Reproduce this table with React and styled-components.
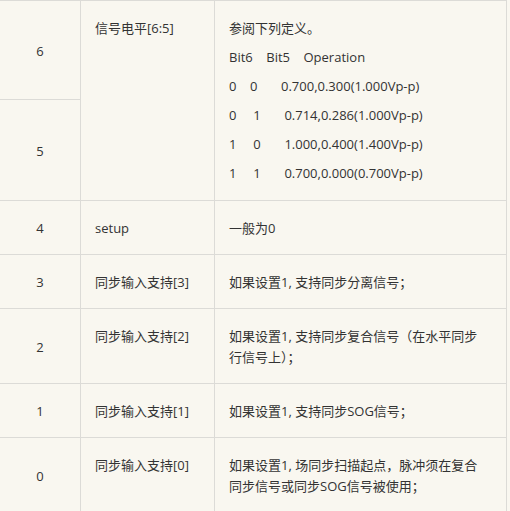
import React from "react";
import styled, { createGlobalStyle } from "styled-components";

const GlobalStyle = createGlobalStyle`
  html, body {
    margin: 0;
    padding: 0;
    background: #f9f7f0;
  }
  body {
    font-family: "Open Sans", "Noto Sans CJK SC", sans-serif;
    color: #333;
  }
`;

const rows = [
  { bit: "4", name: "setup", desc: ["一般为0"] },
  { bit: "3", name: "同步输入支持[3]", desc: ["如果设置1, 支持同步分离信号；"] },
  { bit: "2", name: "同步输入支持[2]", desc: ["如果设置1, 支持同步复合信号（在水平同步行信号上）；"] },
  { bit: "1", name: "同步输入支持[1]", desc: ["如果设置1, 支持同步SOG信号；"] },
  { bit: "0", name: "同步输入支持[0]", desc: ["如果设置1, 场同步扫描起点，脉冲须在复合同步信号或同步SOG信号被使用；"] },
];

const levels = [
  "参阅下列定义。",
  "Bit6    Bit5    Operation",
  "0    0       0.700,0.300(1.000Vp-p)",
  "0     1       0.714,0.286(1.000Vp-p)",
  "1     0       1.000,0.400(1.400Vp-p)",
  "1     1       0.700,0.000(0.700Vp-p)",
];

export default function App() {
  return (
    <>
      <GlobalStyle />
      <Table>
        <colgroup>
          <col style={{ width: 81 }} />
          <col style={{ width: 134 }} />
          <col style={{ width: 292 }} />
        </colgroup>
        <tbody>
          <tr>
            <BitCell $h={99}>6</BitCell>
            <NameCell rowSpan={2}>信号电平[6:5]</NameCell>
            <DescCell rowSpan={2}>
              {levels.map((line, i) => (
                <Line key={i} $pre={i > 0}>{line}</Line>
              ))}
            </DescCell>
          </tr>
          <tr>
            <BitCell $h={101}>5</BitCell>
          </tr>
          {rows.map(row => (
            <tr key={row.bit}>
              <BitCell>{row.bit}</BitCell>
              <NameCell>{row.name}</NameCell>
              <DescCell>
                {row.desc.map((d, i) => (
                  <Line key={i}>{d}</Line>
                ))}
              </DescCell>
            </tr>
          ))}
        </tbody>
      </Table>
    </>
  );
}

// styles
const Table = styled.table`
  table-layout: fixed;
  width: 507px;
  border-collapse: separate;
  border-spacing: 0;
  border-top: 1px solid #dcdbd7;
  font-size: 13px;
  line-height: 21px;

  td {
    box-sizing: border-box;
    border-right: 1px solid #dcdbd7;
    border-bottom: 1px solid #dcdbd7;
    padding: 17px 14px 15px;
  }
`;

const BitCell = styled.td`
  text-align: center;
  vertical-align: middle;
  height: ${({ $h }) => ($h ? `${$h}px` : "auto")};
`;

const NameCell = styled.td`
  vertical-align: top;
`;

const DescCell = styled.td`
  vertical-align: top;
  && {
    padding-right: 22px;
  }
`;

const Line = styled.p`
  margin: 0 0 8px;
  white-space: ${({ $pre }) => ($pre ? "pre" : "normal")};

  &:last-child {
    margin-bottom: 0;
  }
`;
